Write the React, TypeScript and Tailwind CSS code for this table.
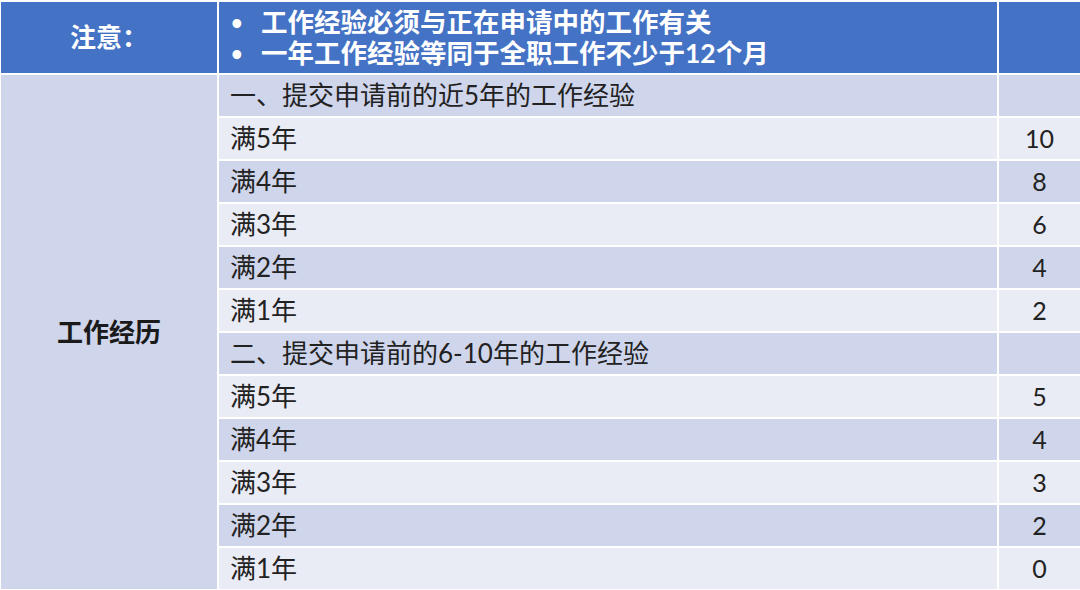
const rows: { label: string; score: string; dark: boolean }[] = [
  { label: "一、提交申请前的近5年的工作经验", score: "", dark: true },
  { label: "满5年", score: "10", dark: false },
  { label: "满4年", score: "8", dark: true },
  { label: "满3年", score: "6", dark: false },
  { label: "满2年", score: "4", dark: true },
  { label: "满1年", score: "2", dark: false },
  { label: "二、提交申请前的6-10年的工作经验", score: "", dark: true },
  { label: "满5年", score: "5", dark: false },
  { label: "满4年", score: "4", dark: true },
  { label: "满3年", score: "3", dark: false },
  { label: "满2年", score: "2", dark: true },
  { label: "满1年", score: "0", dark: false },
]

export default function App() {
  return (
    <div
      className="w-[1080px] h-[590px] bg-white overflow-hidden pt-[2px] pl-[1px]"
      style={{ fontFamily: '"Lato", "Noto Sans CJK SC", sans-serif' }}
    >
      <div className="grid grid-cols-[216px_778px_81px] grid-rows-[71px_repeat(12,41px)] gap-[2px] bg-white">
        <div className="bg-[#4472c4] flex items-center justify-center text-white font-bold text-[26px]">
          注意：
        </div>
        <div className="bg-[#4472c4] flex flex-col justify-center pl-[12px] text-white font-bold text-[26.5px] leading-[31px]">
          <div className="flex items-center">
            <span className="w-[30px] text-[20px]">•</span>
            <span>工作经验必须与正在申请中的工作有关</span>
          </div>
          <div className="flex items-center">
            <span className="w-[30px] text-[20px]">•</span>
            <span>一年工作经验等同于全职工作不少于12个月</span>
          </div>
        </div>
        <div className="bg-[#4472c4]" />

        <div className="row-span-12 bg-[#cfd5ea] flex items-center justify-center text-[#1a1a1a] font-bold text-[26px]">
          工作经历
        </div>
        {rows.map((r, i) => (
          <div key={i} className="contents">
            <div
              className={`${r.dark ? "bg-[#cfd5ea]" : "bg-[#e9ebf5]"} flex items-center pl-[11px] text-[26px] text-[#222]`}
            >
              {r.label}
            </div>
            <div
              className={`${r.dark ? "bg-[#cfd5ea]" : "bg-[#e9ebf5]"} flex items-center justify-center text-[25px] text-[#222]`}
            >
              {r.score}
            </div>
          </div>
        ))}
      </div>
    </div>
  )
}
